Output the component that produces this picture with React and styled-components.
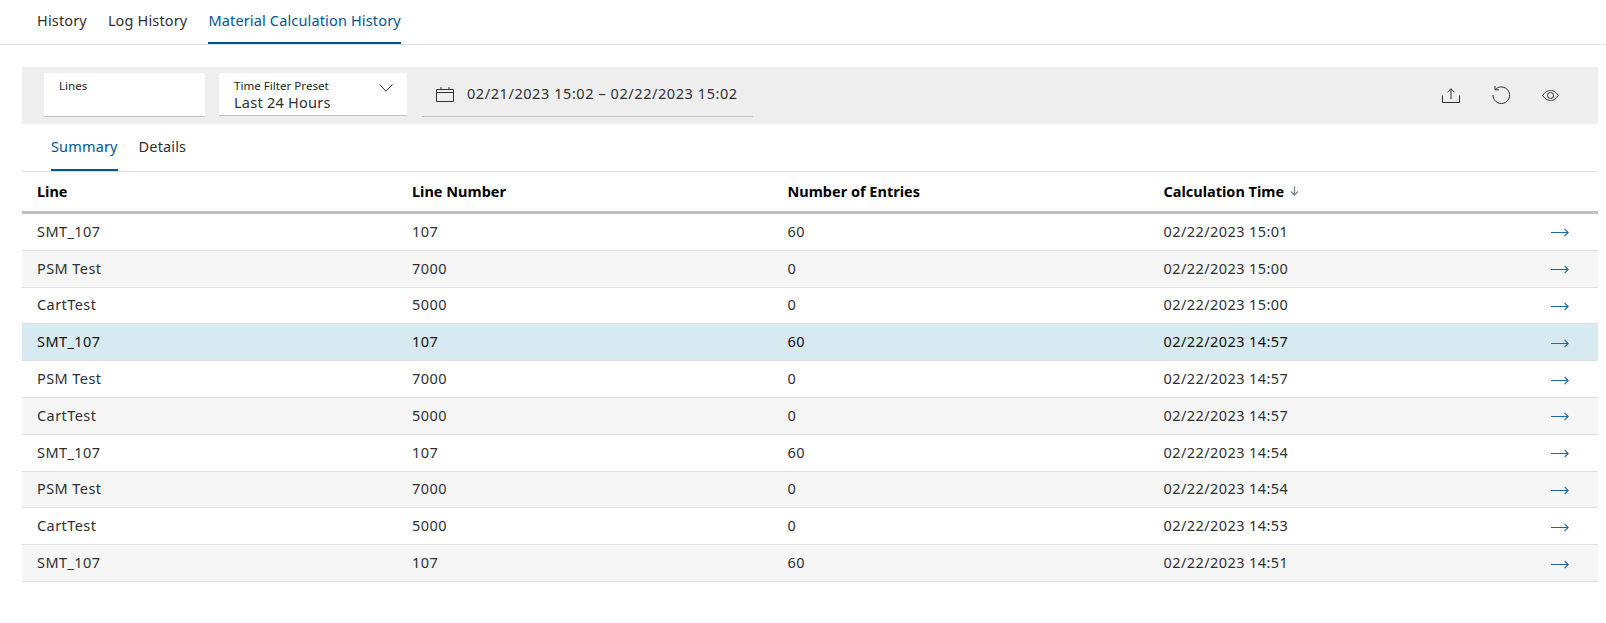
import React from "react";
import styled, { createGlobalStyle } from "styled-components";

const Global = createGlobalStyle`
  html, body { margin: 0; padding: 0; background: #fff; }
  body { font-family: "Noto Sans", "Liberation Sans", sans-serif; color: #2e3033; }
  * { box-sizing: border-box; }
`;
const Page = styled.div`
  width: 1606px;
  height: 623px;
  overflow: hidden;
`;
const TopTabs = styled.nav`
  display: flex;
  height: 45px;
  padding-left: 26.5px;
  border-bottom: 1px solid #dfdfe0;
`;
const SubTabs = styled.nav`
  display: flex;
  height: 48px;
  padding-left: 18.5px;
  border-bottom: 1px solid #dfdfe0;
`;
const Tab = styled.div`
  height: 100%;
  padding: ${p => (p.$sub ? "12px 10.5px 0" : "10px 10.5px 0")};
  font-size: 14.5px;
  line-height: 20px;
  letter-spacing: 0.15px;
  color: ${p => (p.$active ? "#005691" : "#2e3033")};
  position: relative;
  white-space: nowrap;
  &::after {
    content: "";
    display: ${p => (p.$active ? "block" : "none")};
    position: absolute;
    left: 10.5px;
    right: 10.5px;
    bottom: 0;
    height: 2px;
    background: #005691;
  }
`;
const Content = styled.main`
  margin: 22px 8px 0 22px;
`;
const FilterBar = styled.section`
  height: 57px;
  background: #eeeeee;
  display: flex;
  align-items: flex-start;
  padding: 6px 0 0 22px;
`;
const Field = styled.div`
  width: ${p => p.$w}px;
  height: ${p => p.$h}px;
  margin-right: ${p => p.$mr}px;
  background: #fff;
  border-bottom: 1px solid #bfc0c2;
  padding: ${p => p.$pad};
  position: relative;
  flex: none;
`;
const FieldLabel = styled.div`
  font-size: 11.6px;
  line-height: 14px;
  color: #1d1f22;
`;
const FieldValue = styled.div`
  font-size: 14.5px;
  line-height: 16px;
  margin-top: 1px;
  letter-spacing: 0.25px;
  color: #2e3033;
`;
const Chevron = styled.svg`
  position: absolute;
  right: 14px;
  top: 11px;
`;
const DateField = styled.div`
  width: 331px;
  height: 44px;
  border-bottom: 1px solid #bfc0c2;
  display: flex;
  align-items: center;
  padding: 0 0 1px 14px;
  gap: 13px;
  font-size: 14.5px;
  letter-spacing: 0.57px;
  color: #2e3033;
  white-space: nowrap;
  flex: none;
`;
const DateText = styled.span`
  position: relative;
  top: -1px;
`;
const Actions = styled.div`
  margin-left: auto;
  display: flex;
  align-items: center;
  height: 44px;
  gap: 31.5px;
  padding-right: 39px;
`;
const columns = "375px 375.5px 376px 1fr";
const HeaderRow = styled.div`
  display: grid;
  grid-template-columns: ${columns};
  height: 42px;
  padding: 0 0 2px 15px;
  border-bottom: 3px solid #bfc0c2;
  align-items: center;
  font-size: 14.5px;
  font-weight: 700;
  color: #000;
`;
const SortHead = styled.div`
  display: flex;
  align-items: center;
  gap: 6px;
`;
const Row = styled.div`
  display: grid;
  grid-template-columns: ${columns};
  height: 36.8px;
  padding: 0 0 2px 15px;
  align-items: center;
  border-bottom: 1px solid #dfdfe0;
  font-size: 14.5px;
  letter-spacing: 0.42px;
  color: ${p => (p.$selected ? "#111" : "#2e3033")};
  background: ${p => (p.$selected ? "#d7e9f1" : p.$odd ? "#f6f6f6" : "#fff")};
`;
const LastCell = styled.div`
  display: flex;
  align-items: center;
  justify-content: space-between;
  padding-right: 29px;
`;
const Arrow = styled.svg`
  position: relative;
  top: 2px;
`;

const rows = [
  ["SMT_107", "107", "60", "02/22/2023 15:01"],
  ["PSM Test", "7000", "0", "02/22/2023 15:00"],
  ["CartTest", "5000", "0", "02/22/2023 15:00"],
  ["SMT_107", "107", "60", "02/22/2023 14:57"],
  ["PSM Test", "7000", "0", "02/22/2023 14:57"],
  ["CartTest", "5000", "0", "02/22/2023 14:57"],
  ["SMT_107", "107", "60", "02/22/2023 14:54"],
  ["PSM Test", "7000", "0", "02/22/2023 14:54"],
  ["CartTest", "5000", "0", "02/22/2023 14:53"],
  ["SMT_107", "107", "60", "02/22/2023 14:51"],
];

const Stroke = { fill: "none", stroke: "#2e3033", strokeWidth: 1 };

export default function App() {
  return (
    <Page>
      <Global />
      <TopTabs>
        <Tab>History</Tab>
        <Tab>Log History</Tab>
        <Tab $active>Material Calculation History</Tab>
      </TopTabs>
      <Content>
        <FilterBar>
          <Field $w={161} $h={44} $mr={14} $pad="6px 0 0 15px">
            <FieldLabel>Lines</FieldLabel>
          </Field>
          <Field $w={188} $h={43} $mr={15} $pad="6px 0 0 15px">
            <FieldLabel>Time Filter Preset</FieldLabel>
            <FieldValue>Last 24 Hours</FieldValue>
            <Chevron width="14" height="8" viewBox="0 0 14 8" {...Stroke}>
              <path d="M0.5 0.5 L7 7.2 L13.5 0.5" />
            </Chevron>
          </Field>
          <DateField>
            <svg width="18" height="15" viewBox="0 0 18 15" {...Stroke}>
              <path d="M0.5 2.5 H17.5 V14.5 H0.5 Z M0.5 5.5 H17.5 M5 0 V2.5 M13 0 V2.5" />
            </svg>
            <DateText>02/21/2023 15:02 – 02/22/2023 15:02</DateText>
          </DateField>
          <Actions>
            <svg width="18" height="15" viewBox="0 0 18 15" {...Stroke}>
              <path d="M0.5 7.5 V14.5 H17.5 V7.5 M9 11 V0.8 M5.5 4.3 L9 0.8 L12.5 4.3" />
            </svg>
            <svg width="19" height="18" viewBox="0 0 19 18" {...Stroke}>
              <path d="M3.2 3.6 A8.3 8.3 0 1 1 1 9 M3 0 V3.8 H7" />
            </svg>
            <svg width="17" height="11" viewBox="0 0 17 11" {...Stroke}>
              <path d="M0.6 5.5 C3.8 1.1 6.2 0.5 8.5 0.5 C10.8 0.5 13.2 1.1 16.4 5.5 C13.2 9.9 10.8 10.5 8.5 10.5 C6.2 10.5 3.8 9.9 0.6 5.5 Z" />
              <circle cx="8.5" cy="5.5" r="3" />
            </svg>
          </Actions>
        </FilterBar>
        <SubTabs>
          <Tab $sub $active>Summary</Tab>
          <Tab $sub>Details</Tab>
        </SubTabs>
        <HeaderRow>
          <div>Line</div>
          <div>Line Number</div>
          <div>Number of Entries</div>
          <SortHead>
            Calculation Time
            <svg width="9" height="10" viewBox="0 0 9 10" fill="none" stroke="#7d8389" strokeWidth="1.3">
              <path d="M4.5 0.5 V9 M1 5.5 L4.5 9 L8 5.5" />
            </svg>
          </SortHead>
        </HeaderRow>
        {rows.map((r, i) => (
          <Row key={i} $odd={i % 2 === 1} $selected={i === 3}>
            <div>{r[0]}</div>
            <div>{r[1]}</div>
            <div>{r[2]}</div>
            <LastCell>
              <span>{r[3]}</span>
              <Arrow width="18" height="9" viewBox="0 0 18 9" fill="none" stroke="#1a6aa3" strokeWidth="1.1">
                <path d="M0 4.5 H17.2 M13.6 0.8 L17.2 4.5 L13.6 8.2" />
              </Arrow>
            </LastCell>
          </Row>
        ))}
      </Content>
    </Page>
  );
}
